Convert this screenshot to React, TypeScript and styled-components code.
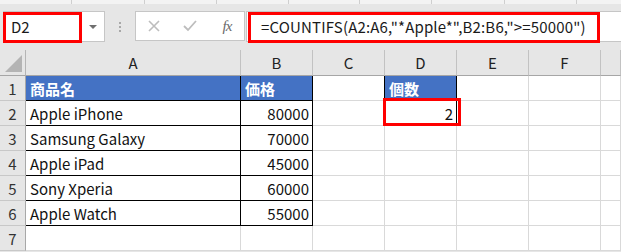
import React from "react";
import styled, { createGlobalStyle } from "styled-components";

const Global = createGlobalStyle`
  html, body { margin: 0; padding: 0; background: #e6e6e6; }
  body { font-family: "Noto Sans CJK JP", "Noto Sans", sans-serif; }
`;

const FONT = `"Noto Sans CJK JP", "Noto Sans", sans-serif`;
const GRID = "#d9d9d9";
const BLACK = "#000";

const Frame = styled.div`
  width: 621px;
  height: 252px;
  overflow: hidden;
  background: #e6e6e6;
  display: flex;
  flex-direction: column;
`;

const TopStrip = styled.div`
  height: 4px;
  display: flex;
  background: #f3f3f3;
`;

const StripSeg = styled.div<{ $w: number }>`
  width: ${(p) => p.$w}px;
  flex: none;
  box-sizing: border-box;
  border-right: 1px solid #cfcfcf;
`;

const FormulaBar = styled.div`
  height: 46px;
  box-sizing: border-box;
  padding: 7px 0 0 3px;
  display: flex;
  align-items: flex-start;
`;

const NameBox = styled.div`
  position: relative;
  width: 102px;
  height: 31px;
  box-sizing: border-box;
  background: #fff;
  border: 1px solid #c6c6c6;
  border-left: none;
  display: flex;
  align-items: center;
  justify-content: space-between;
  padding: 0 7px 0 8px;
  font-family: ${FONT};
  font-size: 15px;
  color: #1a1a1a;
`;

const DropArrow = styled.span`
  width: 0;
  height: 0;
  border-left: 4px solid transparent;
  border-right: 4px solid transparent;
  border-top: 4px solid #6f6f6f;
`;

const Highlight = styled.div<{ $l: number; $t: number; $w: number; $h: number }>`
  position: absolute;
  left: ${(p) => p.$l}px;
  top: ${(p) => p.$t}px;
  width: ${(p) => p.$w}px;
  height: ${(p) => p.$h}px;
  box-sizing: border-box;
  border: 3px solid #ff0000;
  pointer-events: none;
  z-index: 2;
`;

const Dots = styled.div`
  width: 30px;
  height: 31px;
  display: flex;
  flex-direction: column;
  align-items: center;
  justify-content: center;
  gap: 2px;
`;

const Dot = styled.span`
  width: 2px;
  height: 2px;
  background: #a8a8a8;
`;

const FxBox = styled.div`
  width: 110px;
  height: 30px;
  box-sizing: border-box;
  background: #fff;
  border: 1px solid #c6c6c6;
  display: flex;
  align-items: center;
`;

const FxSlot = styled.div`
  width: 36px;
  height: 100%;
  display: flex;
  align-items: center;
  justify-content: center;
`;

const FxText = styled.span`
  font-family: "Liberation Serif", serif;
  font-style: italic;
  font-size: 15px;
  color: #6a6a6a;
  letter-spacing: -1px;
  margin-left: 2px;
`;

const FormulaInput = styled.div`
  position: relative;
  flex: 1;
  margin-left: 1px;
  height: 31px;
  box-sizing: border-box;
  background: #fff;
  border: 1px solid #c6c6c6;
  border-right: none;
  display: flex;
  align-items: center;
  padding-left: 14px;
  font-family: ${FONT};
  font-size: 15px;
  letter-spacing: 0.16px;
  color: #1a1a1a;
  white-space: nowrap;
`;

const Sheet = styled.div`
  display: grid;
  grid-template-columns: 26px 215px 72px 72px 72px 72px 72px 1fr;
  grid-template-rows: 26px repeat(7, 25px);
  background: #fff;
`;

const Corner = styled.div`
  background: #e6e6e6;
  border-right: 1px solid #b5b5b5;
  border-bottom: 1px solid #a6a6a6;
  display: flex;
  align-items: flex-end;
  justify-content: flex-end;
  padding: 0 3px 3px 0;
`;

const ColHead = styled.div`
  background: #e6e6e6;
  border-right: 1px solid #c2c2c2;
  border-bottom: 1px solid #a6a6a6;
  display: flex;
  align-items: center;
  justify-content: center;
  font-family: ${FONT};
  font-size: 15px;
  color: #222;
`;

const RowHead = styled.div`
  background: #e6e6e6;
  border-right: 1px solid #a8a8a8;
  border-bottom: 1px solid #c8c8c8;
  display: flex;
  align-items: center;
  justify-content: center;
  font-family: ${FONT};
  font-size: 15px;
  color: #333;
`;

const Cell = styled.div<{
  $right: string;
  $bottom: string;
  $bg?: string;
  $num?: boolean;
  $head?: boolean;
}>`
  position: relative;
  box-sizing: border-box;
  background: ${(p) => p.$bg ?? "#fff"};
  border-right: 1px solid ${(p) => p.$right};
  border-bottom: 1px solid ${(p) => p.$bottom};
  display: flex;
  align-items: center;
  justify-content: ${(p) => (p.$num ? "flex-end" : "flex-start")};
  padding: 1px 3px 0 4px;
  font-family: ${FONT};
  font-size: 15px;
  font-weight: ${(p) => (p.$head ? 700 : 400)};
  color: ${(p) => (p.$head ? "#fff" : "#111")};
  white-space: nowrap;
  overflow: visible;
`;

const CornerTriangle = () => (
  <svg width="17" height="17" viewBox="0 0 17 17">
    <polygon points="17,0 17,17 0,17" fill="#b4b4b4" />
  </svg>
);

const CrossIcon = () => (
  <svg width="12" height="12" viewBox="0 0 12 12">
    <path d="M1 1 L11 11 M11 1 L1 11" stroke="#bdbdbd" strokeWidth="1.6" fill="none" />
  </svg>
);

const CheckIcon = () => (
  <svg width="14" height="12" viewBox="0 0 14 12">
    <path d="M1 6 L5 10 L13 1" stroke="#bdbdbd" strokeWidth="1.8" fill="none" />
  </svg>
);

const cols = ["A", "B", "C", "D", "E", "F", ""];

type CellData = { text?: string; num?: boolean; head?: boolean };

const data: Record<string, CellData> = {
  A1: { text: "商品名", head: true },
  B1: { text: "価格", head: true },
  D1: { text: "個数", head: true },
  A2: { text: "Apple iPhone" },
  B2: { text: "80000", num: true },
  A3: { text: "Samsung Galaxy" },
  B3: { text: "70000", num: true },
  A4: { text: "Apple iPad" },
  B4: { text: "45000", num: true },
  A5: { text: "Sony Xperia" },
  B5: { text: "60000", num: true },
  A6: { text: "Apple Watch" },
  B6: { text: "55000", num: true },
  D2: { text: "2", num: true },
};

const inTable = (c: string, r: number) =>
  ((c === "A" || c === "B") && r <= 6) || (c === "D" && r <= 2);

const rightColor = (c: string, r: number) => {
  if (inTable(c, r)) return BLACK;
  if (c === "C" && r <= 2) return BLACK;
  return GRID;
};

const bottomColor = (c: string, r: number) => (inTable(c, r) ? BLACK : GRID);

export default function App() {
  const rows = [1, 2, 3, 4, 5, 6, 7];
  return (
    <>
      <Global />
      <Frame>
        <TopStrip>
          {[72, 73, 72, 72, 71, 72, 73, 72].map((w, i) => (
            <StripSeg key={i} $w={w} />
          ))}
        </TopStrip>
        <FormulaBar>
          <NameBox>
            <span>D2</span>
            <DropArrow />
            <Highlight $l={0} $t={0} $w={79} $h={31} />
          </NameBox>
          <Dots>
            <Dot />
            <Dot />
            <Dot />
          </Dots>
          <FxBox>
            <FxSlot>
              <CrossIcon />
            </FxSlot>
            <FxSlot>
              <CheckIcon />
            </FxSlot>
            <FxSlot>
              <FxText>fx</FxText>
            </FxSlot>
          </FxBox>
          <FormulaInput>
            =COUNTIFS(A2:A6,"*Apple*",B2:B6,"&gt;=50000")
            <Highlight $l={1} $t={0} $w={352} $h={31} />
          </FormulaInput>
        </FormulaBar>
        <Sheet>
          <Corner>
            <CornerTriangle />
          </Corner>
          {cols.map((c, i) => (
            <ColHead key={i}>{c}</ColHead>
          ))}
          {rows.map((r) => (
            <React.Fragment key={r}>
              <RowHead>{r}</RowHead>
              {cols.map((c, i) => {
                const key = `${c || "G"}${r}`;
                const d = data[key] ?? {};
                return (
                  <Cell
                    key={i}
                    $right={rightColor(c, r)}
                    $bottom={bottomColor(c, r)}
                    $bg={d.head ? "#4472c4" : undefined}
                    $num={d.num}
                    $head={d.head}
                  >
                    {d.text}
                    {key === "D2" && <Highlight $l={-2} $t={-3} $w={78} $h={28} />}
                  </Cell>
                );
              })}
            </React.Fragment>
          ))}
        </Sheet>
      </Frame>
    </>
  );
}
